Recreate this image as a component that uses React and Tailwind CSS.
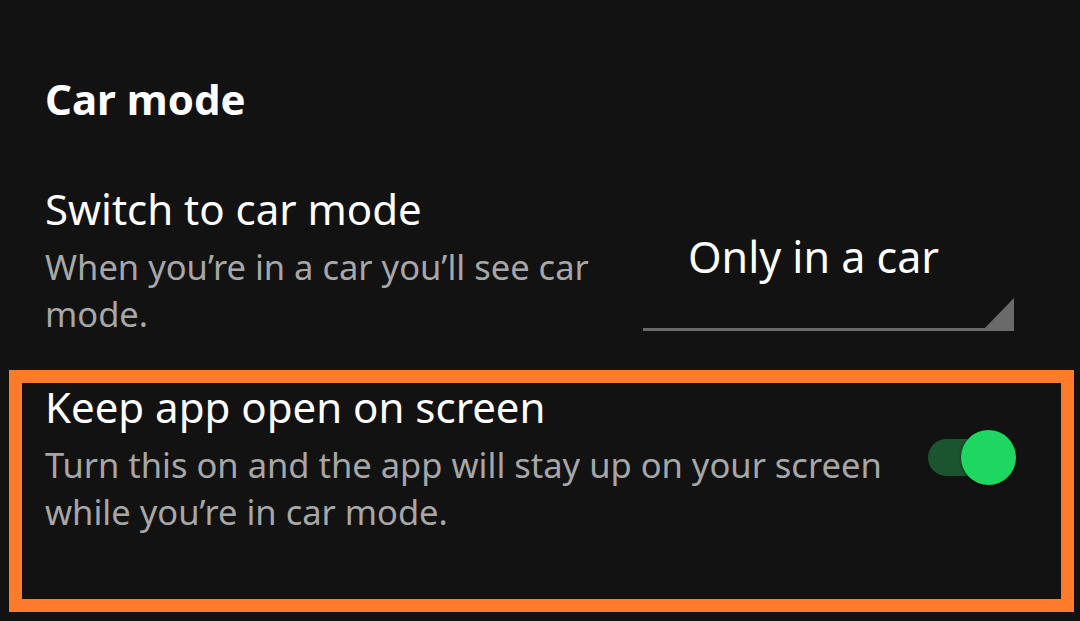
import React from "react";

const font = { fontFamily: "'Noto Sans', Lato, sans-serif" };

const Toggle = ({ on }) => (
  <div className="relative w-[88px] h-[55px] flex items-center">
    <div className={`w-[72px] h-[37px] rounded-full ${on ? "bg-[#1b5530]" : "bg-[#555]"}`} />
    <div className="absolute right-0 top-0 w-[55px] h-[55px] rounded-full bg-[#1ed760] shadow-[0_1px_3px_rgba(0,0,0,0.6)]" />
  </div>
);

const Dropdown = ({ value }) => (
  <div className="relative w-[371px] h-[98px]">
    <div className="pl-[45px] text-[43px] leading-[48px] text-white">{value}</div>
    <div className="absolute left-0 right-0 bottom-0 h-[3px] bg-[#6a6a6a]" />
    <svg className="absolute right-0 bottom-0" width="32" height="33" viewBox="0 0 32 33">
      <polygon points="32,0 32,33 0,33" fill="#6a6a6a" />
    </svg>
  </div>
);

export default function App() {
  return (
    <div className="w-[1080px] h-[621px] bg-[#121212] overflow-hidden" style={font}>
      <div className="pl-[45px] pt-[75px] text-[42px] leading-[48px] font-bold text-white">Car mode</div>

      <div className="flex items-start mt-[62px] pl-[45px] pr-[66px]">
        <div className="w-[570px]">
          <div className="text-[42px] leading-[48px] text-white">Switch to car mode</div>
          <div className="mt-[10px] text-[34.5px] leading-[47px] text-[#a7a7a7]">
            When you’re in a car you’ll see car mode.
          </div>
        </div>
        <div className="ml-auto mt-[48px]">
          <Dropdown value="Only in a car" />
        </div>
      </div>

      <div className="mt-[33px] ml-[9px] w-[1065px] h-[242px] border-[13px] border-[#fe7b2a]">
        <div className="flex items-start pl-[23px] pr-[45px]">
          <div className="flex-1">
            <div className="text-[42px] leading-[48px] text-white">Keep app open on screen</div>
            <div className="mt-[10px] text-[34.5px] leading-[47px] text-[#a7a7a7] w-[845px]">
              Turn this on and the app will stay up on your screen while you’re in car mode.
            </div>
          </div>
          <div className="mt-[47px]">
            <Toggle on />
          </div>
        </div>
      </div>
    </div>
  );
}
